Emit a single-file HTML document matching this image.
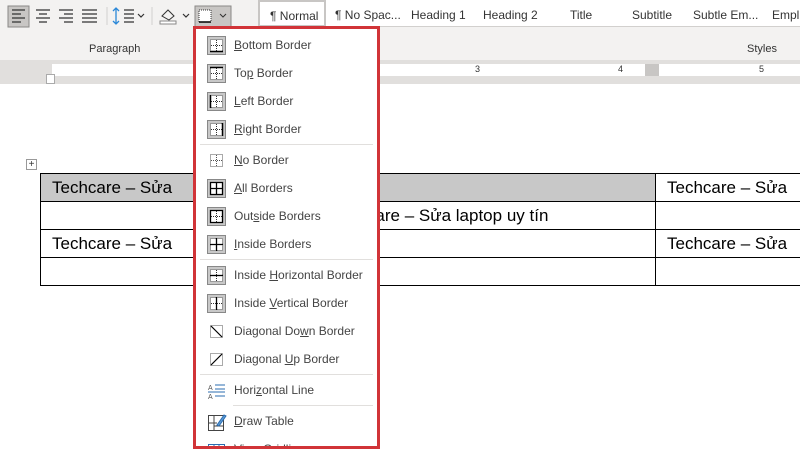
<!DOCTYPE html><html><head><meta charset="utf-8"><style>
*{margin:0;padding:0;box-sizing:border-box}
body{width:800px;height:450px;overflow:hidden;position:relative;background:#fff;font-family:"Liberation Sans",sans-serif}
.rib{position:absolute;left:0;top:0;width:800px;height:60px;background:#f3f2f1}
.gal{position:absolute;left:258px;top:0;width:542px;height:27px;background:#fff;border-bottom:1px solid #d2d0ce}
.gal span{position:absolute;top:8px;font-size:12px;color:#333}
.ab{position:absolute;font-size:11px;color:#333}
.ruler{position:absolute;left:0;top:60px;width:800px;height:24px;background:#e1dfdd}
.rw{position:absolute;top:4px;height:12px;background:#fff}
.rn{position:absolute;top:4px;font-size:9px;color:#333}
table{position:absolute;left:40px;top:173px;border-collapse:collapse;table-layout:fixed;width:820px}
td{border:1px solid #000;height:28px;font-family:"Liberation Sans",sans-serif;font-size:17px;padding-left:11px;white-space:nowrap;vertical-align:middle;overflow:hidden}
.menu{position:absolute;left:193px;top:26px;width:187px;height:423px;border:3px solid #d13438;background:#fff;overflow:hidden}
.it{position:absolute;left:0;height:28px;width:100%}
.it svg{position:absolute;left:11px;top:5px}
.it span{position:absolute;left:38px;top:7px;font-size:12px;color:#444;white-space:nowrap}
.sep{position:absolute;height:1px;background:#e1dfdd;left:4px;right:4px}
u{text-decoration:underline}
</style></head><body>
<div class="rib"></div>
<svg style="position:absolute;left:0;top:0" width="258" height="30">
<rect x="8" y="6" width="21" height="21" fill="#c8c6c4" stroke="#8a8886"/>
<g stroke="#333" stroke-width="1.2">
<path d="M12 10h13M12 14h9M12 18h13M12 22h9"/>
<path d="M36 10h14M39 14h8M36 18h14M39 22h8"/>
<path d="M59 10h14M64 14h9M59 18h14M64 22h9"/>
<path d="M82 10h15M82 14h15M82 18h15M82 22h15"/>
<path d="M124 10h10M124 14h10M124 18h10M124 22h10"/>
<path d="M138 14l3 3 3-3M208 14l3 3 3-3M183 14l3 3 3-3" fill="none"/>
</g>
<path d="M116 8v16M113 11l3-3 3 3M113 21l3 3 3-3" stroke="#2b88d8" fill="none" stroke-width="1.3"/>
<line x1="107" y1="7" x2="107" y2="25" stroke="#d2d0ce"/><line x1="152" y1="7" x2="152" y2="25" stroke="#d2d0ce"/>
<path d="M162 16l6-6 6 6-5 4z" fill="none" stroke="#333"/><rect x="160" y="21" width="16" height="3" fill="#fff" stroke="#888"/>
<rect x="195" y="6" width="36" height="22" fill="#c8c6c4" stroke="#8a8886"/>
<rect x="199" y="10" width="12" height="12" fill="#fff" stroke="#333" stroke-dasharray="1 1"/><line x1="199" y1="22" x2="211" y2="22" stroke="#000" stroke-width="1.5"/>
<path d="M220 14l3 3 3-3" stroke="#333" fill="none"/>
</svg>
<div class="ab" style="left:89px;top:43px">Paragraph</div>
<div class="ab" style="left:747px;top:43px">Styles</div>
<div class="gal">
<span style="left:0;top:0;width:68px;height:27px;border:2px solid #c8c6c4;background:#fff;padding:7px 0 0 10px">¶ Normal</span>
<span style="left:77px">¶ No Spac...</span><span style="left:153px">Heading 1</span><span style="left:225px">Heading 2</span><span style="left:312px">Title</span><span style="left:374px">Subtitle</span><span style="left:435px">Subtle Em...</span><span style="left:514px">Empl</span>
</div>
<div class="ruler"><div class="rw" style="left:52px;width:593px"></div><div class="rw" style="left:659px;width:141px"></div>
<div class="rw" style="left:645px;width:14px;background:#c8c6c4"></div>
<div class="rn" style="left:475px">3</div><div class="rn" style="left:618px">4</div><div class="rn" style="left:759px">5</div>
<div style="position:absolute;left:46px;top:14px;width:9px;height:10px;background:#fff;border:1px solid #aaa"></div></div>
<div style="position:absolute;left:26px;top:159px;width:11px;height:11px;border:1px solid #999;font-size:10px;line-height:9px;text-align:center;color:#333">+</div>
<table>
<colgroup><col style="width:615px"><col style="width:205px"></colgroup>
<tr><td style="background:#c8c8c8">Techcare – Sửa</td><td>Techcare – Sửa</td></tr>
<tr><td style="padding-left:290px">Techcare – Sửa laptop uy tín</td><td></td></tr>
<tr><td>Techcare – Sửa</td><td>Techcare – Sửa</td></tr>
<tr><td></td><td></td></tr>
</table>
<div class="menu">
<svg width="0" height="0" style="position:absolute"><defs>
<g id="b"><rect x="0.5" y="0.5" width="18" height="18" fill="#c8c8c8" stroke="#888"/><rect x="3" y="3" width="13" height="13" fill="#fff"/><rect x="3.5" y="3.5" width="12" height="12" fill="none" stroke="#333" stroke-dasharray="1 1"/><path d="M9.5 4v11M4 9.5h11" stroke="#333" stroke-dasharray="1 1"/></g>
<g id="n"><rect x="3.5" y="3.5" width="12" height="12" fill="#fff" stroke="#555" stroke-dasharray="1 1"/><path d="M9.5 4v11M4 9.5h11" stroke="#555" stroke-dasharray="1 1"/></g>
</defs></svg>
<div class="it" style="top:2px"><svg width="20" height="20"><use href="#b"/><path d="M3 15.5h13" stroke="#000" stroke-width="1.5"/></svg><span><u>B</u>ottom Border</span></div>
<div class="it" style="top:30px"><svg width="20" height="20"><use href="#b"/><path d="M3 3.5h13" stroke="#000" stroke-width="1.5"/></svg><span>To<u>p</u> Border</span></div>
<div class="it" style="top:58px"><svg width="20" height="20"><use href="#b"/><path d="M3.5 3v13" stroke="#000" stroke-width="1.5"/></svg><span><u>L</u>eft Border</span></div>
<div class="it" style="top:86px"><svg width="20" height="20"><use href="#b"/><path d="M15.5 3v13" stroke="#000" stroke-width="1.5"/></svg><span><u>R</u>ight Border</span></div>
<div class="sep" style="top:115px"></div>
<div class="it" style="top:117px"><svg width="20" height="20"><use href="#n"/></svg><span><u>N</u>o Border</span></div>
<div class="it" style="top:145px"><svg width="20" height="20"><use href="#b"/><path d="M3.5 3.5h12v12h-12zM9.5 3v13M3 9.5h13" fill="none" stroke="#000" stroke-width="1.3"/></svg><span><u>A</u>ll Borders</span></div>
<div class="it" style="top:173px"><svg width="20" height="20"><use href="#b"/><path d="M3.5 3.5h12v12h-12z" fill="none" stroke="#000" stroke-width="1.3"/></svg><span>Out<u>s</u>ide Borders</span></div>
<div class="it" style="top:201px"><svg width="20" height="20"><use href="#b"/><path d="M9.5 3v13M3 9.5h13" stroke="#000" stroke-width="1.3"/></svg><span><u>I</u>nside Borders</span></div>
<div class="sep" style="top:230px"></div>
<div class="it" style="top:232px"><svg width="20" height="20"><use href="#b"/><path d="M3 9.5h13" stroke="#000" stroke-width="1.3"/></svg><span>Inside <u>H</u>orizontal Border</span></div>
<div class="it" style="top:260px"><svg width="20" height="20"><use href="#b"/><path d="M9.5 3v13" stroke="#000" stroke-width="1.3"/></svg><span>Inside <u>V</u>ertical Border</span></div>
<div class="it" style="top:288px"><svg width="20" height="20"><rect x="3.5" y="3.5" width="12" height="12" fill="none" stroke="#555" stroke-dasharray="1 1"/><path d="M4 4l11 11" stroke="#000" stroke-width="1.2"/></svg><span>Diagonal Do<u>w</u>n Border</span></div>
<div class="it" style="top:316px"><svg width="20" height="20"><rect x="3.5" y="3.5" width="12" height="12" fill="none" stroke="#555" stroke-dasharray="1 1"/><path d="M4 15L15 4" stroke="#000" stroke-width="1.2"/></svg><span>Diagonal <u>U</u>p Border</span></div>
<div class="sep" style="top:345px"></div>
<div class="it" style="top:347px"><svg width="20" height="20"><text x="1" y="9" font-size="7" fill="#555" font-family="Liberation Sans">A</text><text x="1" y="18" font-size="7" fill="#555" font-family="Liberation Sans">A</text><path d="M8 4h10M8 8h10M1 11h17M8 15h10" stroke="#2b6cb0" stroke-width="1"/></svg><span>Hori<u>z</u>ontal Line</span></div>
<div class="sep" style="top:376px;left:37px"></div>
<div class="it" style="top:378px"><svg width="20" height="20"><rect x="1.5" y="3.5" width="15" height="15" fill="#fff" stroke="#444"/><path d="M1 11h9M7 4v14M7 14h9" stroke="#444"/><path d="M10 13l7-10 2 1-7 10z" fill="#5b9bd5" stroke="#2b6cb0"/></svg><span><u>D</u>raw Table</span></div>
<div class="it" style="top:406px"><svg width="20" height="20"><rect x="1.5" y="4.5" width="16" height="14" fill="#fff" stroke="#2b6cb0"/><path d="M7 5v13M12 5v13M2 10h15" stroke="#2b6cb0"/></svg><span>View Gridlines</span></div>
</div>
</body></html>
